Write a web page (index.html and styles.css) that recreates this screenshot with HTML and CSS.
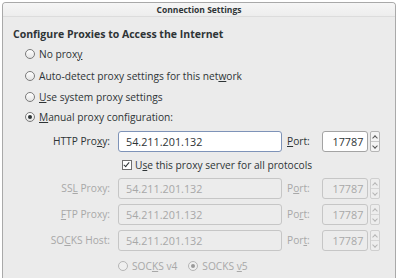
FILE: index.html
```html
<!DOCTYPE html>
<html>
<head>
<meta charset="utf-8">
<link rel="stylesheet" href="styles.css">
</head>
<body>
<div class="window">
  <div class="titlebar">Connection Settings</div>
  <div class="content">
    <div class="heading">Configure Proxies to Access the Internet</div>
    <div class="radios">
      <div class="radio-row"><span class="radio"></span><span>No prox<u>y</u></span></div>
      <div class="radio-row"><span class="radio"></span><span>Auto-detect proxy settings for this net<u>w</u>ork</span></div>
      <div class="radio-row"><span class="radio"></span><span><u>U</u>se system proxy settings</span></div>
      <div class="radio-row"><span class="radio checked"></span><span><u>M</u>anual proxy configuration:</span></div>
    </div>
    <div class="grid">
      <div class="label">HTTP Pro<u>x</u>y:</div>
      <div class="field focus">54.211.201.132</div>
      <div class="plabel"><u>P</u>ort:</div>
      <div class="port"><div class="pfield">17787</div><div class="spin"><span class="up"></span><span class="down"></span></div></div>

      <div class="check-row"><span class="check"></span><span>U<u>s</u>e this proxy server for all protocols</span></div>

      <div class="label dis">SS<u>L</u> Proxy:</div>
      <div class="field dis">54.211.201.132</div>
      <div class="plabel dis">P<u>o</u>rt:</div>
      <div class="port dis"><div class="pfield">17787</div><div class="spin"><span class="up"></span><span class="down"></span></div></div>

      <div class="label dis"><u>F</u>TP Proxy:</div>
      <div class="field dis">54.211.201.132</div>
      <div class="plabel dis">Po<u>r</u>t:</div>
      <div class="port dis"><div class="pfield">17787</div><div class="spin"><span class="up"></span><span class="down"></span></div></div>

      <div class="label dis">SO<u>C</u>KS Host:</div>
      <div class="field dis">54.211.201.132</div>
      <div class="plabel dis">Por<u>t</u>:</div>
      <div class="port dis"><div class="pfield">17787</div><div class="spin"><span class="up"></span><span class="down"></span></div></div>

      <div class="socks dis">
        <span class="radio"></span><span>SOC<u>K</u>S v4</span>
        <span class="radio checked gap"></span><span>SOCKS <u>v</u>5</span>
      </div>
    </div>
  </div>
</div>
</body>
</html>
```
FILE: styles.css
```css
html, body {
  margin: 0;
  padding: 0;
  background: #ffffff;
  width: 400px;
  height: 278px;
  overflow: hidden;
}
body {
  font-family: "Open Sans", "DejaVu Sans", sans-serif;
  font-size: 10.2px;
  color: #2e3436;
}
u { text-decoration: underline; text-underline-offset: 1px; }
.window {
  margin: 2px 4px 0 2px;
  height: 276px;
  box-sizing: border-box;
  border: 1px solid #a9a9a9;
  border-bottom: none;
  border-radius: 4px 4px 0 0;
  background: #ebebeb;
}
.titlebar {
  height: 13px;
  line-height: 13px;
  text-align: center;
  font-weight: bold;
  font-size: 8.5px;
  color: #2e3436;
  background: linear-gradient(#f6f6f6, #ededed);
  border-bottom: 1px solid #dcdcdc;
  border-radius: 3px 3px 0 0;
}
.content {
  padding: 9px 0 0 10px;
}
.heading {
  font-weight: bold;
  font-size: 10.5px;
  height: 16px;
  line-height: 16px;
}
.radios {
  margin-top: 1px;
  padding-left: 12px;
}
.radio-row {
  height: 22px;
  display: flex;
  align-items: center;
}
.radio-row:nth-child(2),
.radio-row:nth-child(3) { height: 21px; }
.radio-row:last-child { height: 20px; }
.radio {
  width: 8px;
  height: 8px;
  border: 1px solid #7b7b7b;
  border-radius: 50%;
  background: linear-gradient(#ffffff, #e4e4e4);
  margin-right: 4px;
  flex: none;
  display: inline-flex;
  align-items: center;
  justify-content: center;
}
.radio.checked::after {
  content: "";
  width: 4px;
  height: 4px;
  border-radius: 50%;
  background: #2e3436;
}
.grid {
  display: grid;
  grid-template-columns: 105px 169px 35px 58px;
  grid-template-rows: 21px 16px 21px 21px 21px 20px;
  row-gap: 5px;
  margin-top: 4px;
}
.grid > .check-row { grid-column: 2 / 5; }
.label {
  text-align: right;
  padding-right: 8px;
  line-height: 21px;
  white-space: nowrap;
}
.plabel {
  line-height: 21px;
  white-space: nowrap;
}
.field {
  width: 164px;
  box-sizing: border-box;
  border: 1px solid #a3a3a3;
  border-radius: 3px;
  background: #ffffff;
  padding: 0 7px;
  display: flex;
  align-items: center;
  font-size: 10.8px;
}
.field.focus { border-color: #7e93b8; }
.port { display: flex; }
.pfield {
  width: 48px;
  box-sizing: border-box;
  border: 1px solid #a3a3a3;
  border-radius: 3px;
  background: #ffffff;
  padding: 0 4px;
  display: flex;
  align-items: center;
  justify-content: flex-end;
  font-size: 10.8px;
}
.spin {
  width: 8px;
  margin-left: 2px;
  border: 1px solid #b5b5b5;
  border-radius: 2px;
  background: #f4f4f4;
  display: flex;
  flex-direction: column;
}
.spin span {
  flex: 1;
  position: relative;
}
.spin .up { border-bottom: 1px solid #c8c8c8; }
.spin span::after {
  content: "";
  position: absolute;
  left: 2px;
  width: 3px;
  height: 3px;
  border-left: 1px solid #555;
  border-top: 1px solid #555;
}
.spin .up::after { top: 4px; transform: rotate(45deg); }
.spin .down::after { top: 2px; transform: rotate(-135deg); }
.check-row {
  display: flex;
  align-items: center;
  padding-left: 4px;
}
.check {
  width: 8px;
  height: 8px;
  border: 1px solid #6f6f6f;
  background: #ffffff;
  margin-right: 3px;
  position: relative;
}
.check::after {
  content: "";
  position: absolute;
  left: 2px;
  top: 0px;
  width: 2px;
  height: 5px;
  border-right: 1.5px solid #2e3436;
  border-bottom: 1.5px solid #2e3436;
  transform: rotate(40deg);
}
.dis { color: #a8a8a8; }
.field.dis, .dis .pfield {
  background: #ececec;
  border-color: #c6c6c6;
  color: #a8a8a8;
}
.dis .spin { border-color: #cfcfcf; background: #ededed; }
.dis .spin span::after { border-color: #b5b5b5; }
.dis .spin .up { border-bottom-color: #d6d6d6; }
.socks {
  grid-column: 2 / 5;
  display: flex;
  align-items: center;
}
.socks .radio { border-color: #b5b5b5; background: #efefef; }
.socks .radio.checked::after { background: #9a9a9a; }
.socks .gap { margin-left: 11px; }
```
